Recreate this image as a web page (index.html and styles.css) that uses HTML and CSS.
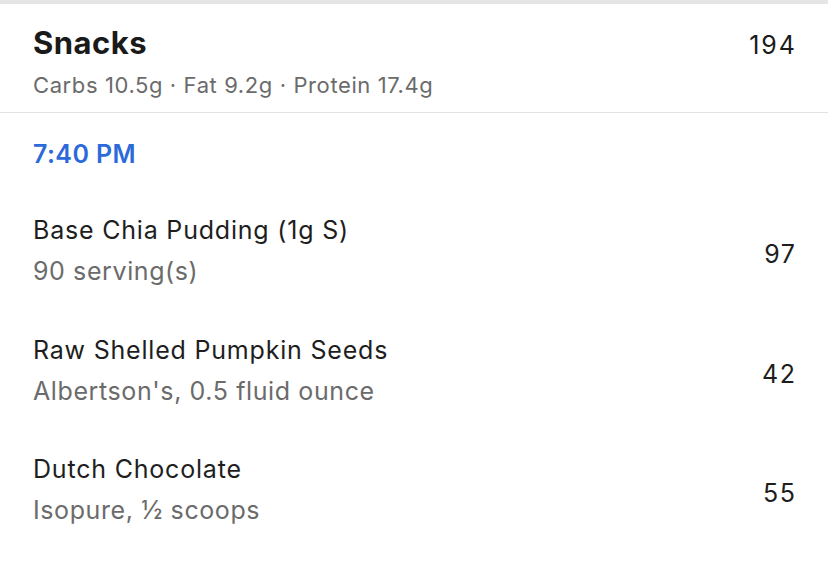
FILE: index.html
```html
<!DOCTYPE html>
<html lang="en">
<head>
<meta charset="utf-8">
<title>Snacks</title>
<link rel="stylesheet" href="styles.css">
</head>
<body>
<div class="topbar"></div>
<header class="meal-header">
  <div class="title-row">
    <h1 class="meal-title">Snacks</h1>
    <span class="meal-total">194</span>
  </div>
  <div class="macros">Carbs 10.5g · Fat 9.2g · Protein 17.4g</div>
</header>
<section class="entries">
  <div class="time">7:40 PM</div>
  <ul class="food-list">
    <li class="food">
      <div class="food-info">
        <div class="food-name">Base Chia Pudding (1g S)</div>
        <div class="food-sub">90 serving(s)</div>
      </div>
      <span class="food-cal">97</span>
    </li>
    <li class="food">
      <div class="food-info">
        <div class="food-name">Raw Shelled Pumpkin Seeds</div>
        <div class="food-sub">Albertson's, 0.5 fluid ounce</div>
      </div>
      <span class="food-cal">42</span>
    </li>
    <li class="food">
      <div class="food-info">
        <div class="food-name">Dutch Chocolate</div>
        <div class="food-sub">Isopure, ½ scoops</div>
      </div>
      <span class="food-cal">55</span>
    </li>
  </ul>
</section>
</body>
</html>
```
FILE: styles.css
```css
* { box-sizing: border-box; }
html, body {
  margin: 0;
  padding: 0;
  background: #ffffff;
  font-family: Inter, "Noto Sans", sans-serif;
  color: #1c1c1c;
}
.topbar {
  height: 4px;
  background: #e5e5e5;
}
.meal-header {
  padding: 21px 33px 14px 33px;
  border-bottom: 1px solid #e2e2e2;
}
.title-row {
  display: flex;
  justify-content: space-between;
  align-items: baseline;
}
.meal-title {
  margin: 0;
  font-size: 31px;
  line-height: 36px;
  font-weight: 700;
  color: #1a1a1a;
  letter-spacing: 0.5px;
}
.meal-total {
  font-size: 25px;
  line-height: 36px;
  color: #1a1a1a;
  letter-spacing: 2px;
  margin-right: -2px;
}
.macros {
  margin-top: 9px;
  font-size: 22px;
  line-height: 26px;
  color: #6b6b6b;
  letter-spacing: 0.6px;
}
.entries {
  padding: 26px 33px 0 33px;
}
.time {
  font-size: 25px;
  line-height: 30px;
  font-weight: 600;
  color: #2c6ad9;
  letter-spacing: 0.4px;
}
.food-list {
  list-style: none;
  margin: 46px 0 0 0;
  padding: 0;
  display: flex;
  flex-direction: column;
  gap: 48.5px;
}
.food {
  display: flex;
  justify-content: space-between;
  align-items: center;
}
.food-name {
  font-size: 25px;
  line-height: 30px;
  color: #1e1e1e;
  letter-spacing: 0.8px;
}
.food-sub {
  margin-top: 11px;
  font-size: 25px;
  line-height: 30px;
  color: #6b6b6b;
  letter-spacing: 0.6px;
}
.food-cal {
  margin-top: 7px;
  margin-right: -1.5px;
  font-size: 25px;
  line-height: 30px;
  color: #1e1e1e;
  letter-spacing: 1.5px;
}
```
